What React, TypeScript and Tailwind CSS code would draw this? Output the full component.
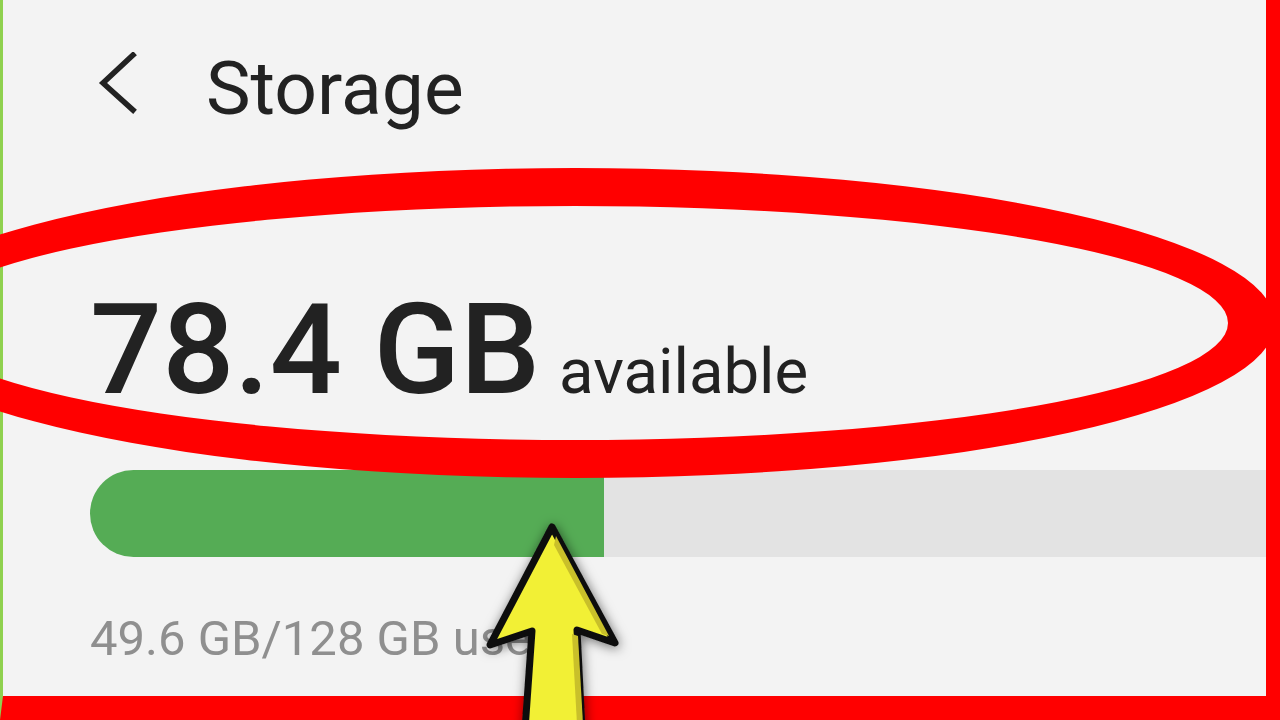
import React from "react";

const BackChevron = () => (
  <svg width="40" height="62" viewBox="0 0 40 62" className="ml-[8px] shrink-0">
    <polyline
      points="35,3 5,31 35,58"
      fill="none"
      stroke="#222222"
      strokeWidth="5.5"
      strokeLinecap="square"
      strokeLinejoin="miter"
    />
  </svg>
);

const HighlightRing = () => (
  <svg
    className="absolute left-0 top-0 pointer-events-none"
    width="1280"
    height="720"
    viewBox="0 0 1280 720"
  >
    <path
      fillRule="evenodd"
      fill="#ff0000"
      d="M -125 323 a 700 155 0 1 0 1400 0 a 700 155 0 1 0 -1400 0 Z M -78 323 a 653 117 0 1 0 1306 0 a 653 117 0 1 0 -1306 0 Z"
    />
  </svg>
);

const PointerArrow = () => (
  <svg
    className="absolute left-0 top-0 pointer-events-none"
    width="1280"
    height="720"
    viewBox="0 0 1280 720"
  >
    <defs>
      <filter id="arrowShadow" x="-30%" y="-30%" width="160%" height="160%">
        <feDropShadow dx="1" dy="2" stdDeviation="6" floodColor="#000000" floodOpacity="0.55" />
      </filter>
    </defs>
    <g filter="url(#arrowShadow)">
      <polygon
        points="552,527 615,643 577,630 582,730 525,730 532,631 490,645"
        fill="#f2f035"
        stroke="#111111"
        strokeWidth="7"
        strokeLinejoin="round"
      />
    </g>
    <polygon points="556,536 609,636 602,634 554,545" fill="#c9c02a" />
    <polygon points="572,634 578,636 583,724 577,724" fill="#c9c02a" />
  </svg>
);

export default function App() {
  return (
    <div
      className="relative w-[1280px] h-[720px] overflow-hidden"
      style={{ fontFamily: "Roboto, 'Noto Sans', sans-serif" }}
    >
      <div className="w-full h-full bg-[#f3f3f3] border-l-[3px] border-l-[#8fd14f] border-r-[14px] border-r-[#ff0000] border-b-[24px] border-b-[#ff0000]">
        <div className="flex flex-col pl-[87px]">
          {/* header */}
          <div className="flex items-start pt-[52px]">
            <BackChevron />
            <h1 className="ml-[68px] text-[75px] leading-[73px] font-normal text-[#222222]">
              Storage
            </h1>
          </div>

          {/* available space */}
          <div className="flex items-baseline mt-[162px] text-[#222222]">
            <span className="text-[127px] leading-[126px] font-medium">78.4 GB</span>
            <span className="ml-[19px] text-[63.5px] leading-[62px] font-normal">available</span>
          </div>

          {/* usage bar */}
          <div className="flex mt-[57px] h-[87px]">
            <div className="w-[514px] bg-[#55ac55] rounded-l-full" />
            <div className="flex-1 bg-[#e3e3e3]" />
          </div>

          <div className="mt-[57px] text-[49px] leading-[49px] text-[#8f8f8f]">
            49.6 GB/128 GB used
          </div>
        </div>
      </div>

      <HighlightRing />
      <PointerArrow />
    </div>
  );
}
